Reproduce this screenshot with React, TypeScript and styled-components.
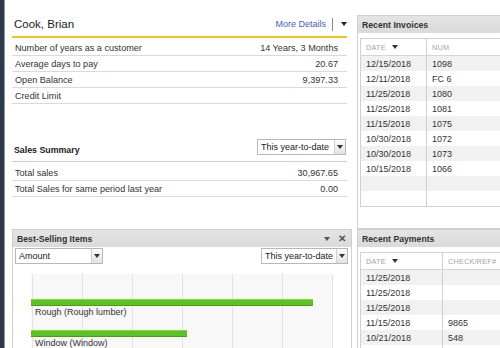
import React from 'react';
import styled, { createGlobalStyle } from 'styled-components';

const GlobalStyle = createGlobalStyle`
  * {
    box-sizing: border-box;
  }

  body {
    margin: 0;
    overflow: hidden;
    background: #fff;
  }
`;

const Page = styled.div`
  display: flex;
  width: 500px;
  height: 348px;
  overflow: hidden;
  background: #fff;
  font-family: 'Liberation Sans', Arial, sans-serif;
  color: #333;
`;

const SideStrip = styled.div`
  flex: 0 0 5px;
  background: #2d3a4c;
  border-right: 1px solid #8d97a3;
`;

const Main = styled.div`
  display: flex;
  gap: 5px;
  padding-left: 7px;
`;

const LeftCol = styled.div`
  flex: 0 0 340px;
  display: flex;
  flex-direction: column;
`;

const Summary = styled.section`
  flex: 0 0 229px;
  width: 335px;
`;

const NameRow = styled.div`
  display: flex;
  align-items: center;
  justify-content: space-between;
  height: 38px;
  padding: 12px 0 0 2px;
  border-bottom: 2px solid #f4c21c;
`;

const Name = styled.h1`
  margin: 0;
  font-size: 11.5px;
  font-weight: normal;
  color: #1a1a1a;
`;

const NameTools = styled.div`
  display: flex;
  align-items: center;
`;

const MoreLink = styled.a`
  font-size: 9px;
  color: #4262c4;
  text-decoration: none;
`;

const Divider = styled.span`
  width: 1px;
  height: 13px;
  margin-left: 6px;
  background: #8a8a8a;
`;

const Caret = styled.span<{ $color?: string }>`
  width: 0;
  height: 0;
  border-left: 3px solid transparent;
  border-right: 3px solid transparent;
  border-top: 4px solid ${(p) => p.$color || '#222'};
`;

const NameCaret = styled(Caret)`
  margin-left: 8px;
`;

const InfoList = styled.div`
  margin-top: 2px;
`;

const InfoRow = styled.div`
  display: flex;
  align-items: center;
  justify-content: space-between;
  height: 16px;
  padding: 0 9px 0 3px;
  border-bottom: 1px solid #dadada;
  font-size: 9.1px;
`;

const SalesHead = styled.div`
  display: flex;
  align-items: flex-end;
  justify-content: space-between;
  height: 58px;
  padding-right: 1px;
  border-bottom: 1px solid #cdcdcd;
`;

const SalesTitle = styled.h2`
  margin: 0;
  padding: 0 0 5px 2px;
  font-size: 8.8px;
  line-height: 12px;
  font-weight: bold;
  color: #222;
`;

const SalesSelect = styled.div`
  margin-bottom: 6px;
`;

const SalesList = styled.div`
  margin-top: 3px;
`;

const SelectBox = styled.div<{ $w: number }>`
  display: flex;
  width: ${(p) => p.$w}px;
  height: 16px;
  border: 1px solid #b8b8b8;
  background: #fff;
`;

const SelectText = styled.span`
  flex: 1;
  padding-left: 3px;
  font-size: 9px;
  line-height: 14px;
  color: #222;
`;

const SelectBtn = styled.span`
  display: flex;
  align-items: center;
  justify-content: center;
  width: 11px;
  border-left: 1px solid #d2d2d2;
  background: linear-gradient(#fbfbfb, #e2e2e2);
`;

const Panel = styled.section<{ $h?: number }>`
  display: flex;
  flex-direction: column;
  ${(p) => (p.$h ? `flex: 0 0 ${p.$h}px;` : 'flex: 1;')}
  border: 1px solid #cfcfcf;
  ${(p) => (p.$h ? '' : 'border-bottom: none;')}
  background: #fff;
`;

const PanelBar = styled.header`
  display: flex;
  align-items: center;
  justify-content: space-between;
  flex: 0 0 17px;
  padding: 0 5px 0 4px;
  background: linear-gradient(#e4e4e4, #dadada);
`;

const PanelTitle = styled.h3`
  margin: 0;
  font-size: 8.7px;
  font-weight: bold;
  color: #333;
`;

const BarTools = styled.div`
  display: flex;
  align-items: center;
  gap: 8px;
`;

const CloseX = styled.span`
  font-size: 10px;
  font-weight: bold;
  line-height: 10px;
  color: #555;
`;

const Controls = styled.div`
  display: flex;
  justify-content: space-between;
  padding: 1px 3px 0 2px;
`;

const Chart = styled.div`
  flex: 1;
  width: 302px;
  margin: 10px 0 0 18px;
  padding-top: 25px;
  background-color: #f8f8f8;
  background-image: repeating-linear-gradient(
    to right,
    #e2e2e2 0 1px,
    transparent 1px 50px
  );
  background-position: 1px 0;
`;

const Bar = styled.div<{ $gap: number }>`
  height: 7px;
  margin-top: ${(p) => p.$gap}px;
  background: #5ec322;
  box-shadow: inset 0 1px #7edb48, inset 0 -1px #47a014;
`;

const BarLabel = styled.div`
  padding-left: 4px;
  font-size: 9px;
  line-height: 12px;
  color: #333;
`;

const RightCol = styled.div`
  flex: 0 0 180px;
  display: flex;
  flex-direction: column;
  padding-top: 15px;
`;

const Table = styled.div`
  margin: 5px 0 0 2px;
  border-top: 1px solid #d0d0d0;
  border-left: 1px solid #d0d0d0;
`;

const InvTable = styled(Table)`
  border-bottom: 1px solid #d0d0d0;
`;

const HeadRow = styled.div`
  display: flex;
  height: 17px;
  border-bottom: 1px solid #d6d6d6;
  background: #fff;
`;

const Row = styled.div<{ $alt: boolean }>`
  display: flex;
  height: 15px;
  background: ${(p) => (p.$alt ? '#f1f1f1' : '#fff')};
`;

const Cell = styled.div<{ $w?: number }>`
  display: flex;
  align-items: center;
  ${(p) => (p.$w ? `flex: 0 0 ${p.$w}px; border-right: 1px solid #d0d0d0;` : 'flex: 1;')}
  padding-left: 5px;
  font-size: 9px;
  color: #333;
  white-space: nowrap;
`;

const HeadCell = styled(Cell)`
  font-size: 7.3px;
  color: #a3a3a3;
  letter-spacing: 0.2px;
`;

const SortCaret = styled(Caret)`
  margin-left: 6px;
`;

const Select = ({ label, w }: { label: string; w: number }) => (
  <SelectBox $w={w}>
    <SelectText>{label}</SelectText>
    <SelectBtn>
      <Caret $color="#333" />
    </SelectBtn>
  </SelectBox>
);

const info = [
  ['Number of years as a customer', '14 Years, 3 Months'],
  ['Average days to pay', '20.67'],
  ['Open Balance', '9,397.33'],
  ['Credit Limit', ''],
];

const sales = [
  ['Total sales', '30,967.65'],
  ['Total Sales for same period last year', '0.00'],
];

const invoices = [
  ['12/15/2018', '1098'],
  ['12/11/2018', 'FC 6'],
  ['11/25/2018', '1080'],
  ['11/25/2018', '1081'],
  ['11/15/2018', '1075'],
  ['10/30/2018', '1072'],
  ['10/30/2018', '1073'],
  ['10/15/2018', '1066'],
  ['', ''],
  ['', ''],
];

const payments = [
  ['11/25/2018', ''],
  ['11/25/2018', ''],
  ['11/25/2018', ''],
  ['11/15/2018', '9865'],
  ['10/21/2018', '548'],
  ['', ''],
];

const items = [
  { name: 'Rough (Rough lumber)', width: 282, gap: 0 },
  { name: 'Window (Window)', width: 156, gap: 12 },
];

const App = () => {
  return (
    <Page>
      <GlobalStyle />
      <SideStrip />
      <Main>
        <LeftCol>
          <Summary>
            <NameRow>
              <Name>Cook, Brian</Name>
              <NameTools>
                <MoreLink>More Details</MoreLink>
                <Divider />
                <NameCaret />
              </NameTools>
            </NameRow>
            <InfoList>
              {info.map(([k, v]) => (
                <InfoRow key={k}>
                  <span>{k}</span>
                  <span>{v}</span>
                </InfoRow>
              ))}
            </InfoList>
            <SalesHead>
              <SalesTitle>Sales Summary</SalesTitle>
              <SalesSelect>
                <Select label="This year-to-date" w={89} />
              </SalesSelect>
            </SalesHead>
            <SalesList>
              {sales.map(([k, v]) => (
                <InfoRow key={k}>
                  <span>{k}</span>
                  <span>{v}</span>
                </InfoRow>
              ))}
            </SalesList>
          </Summary>

          <Panel>
            <PanelBar>
              <PanelTitle>Best-Selling Items</PanelTitle>
              <BarTools>
                <Caret $color="#555" />
                <CloseX>✕</CloseX>
              </BarTools>
            </PanelBar>
            <Controls>
              <Select label="Amount" w={88} />
              <Select label="This year-to-date" w={87} />
            </Controls>
            <Chart>
              {items.map((it) => (
                <div key={it.name}>
                  <Bar $gap={it.gap} style={{ width: it.width }} />
                  <BarLabel>{it.name}</BarLabel>
                </div>
              ))}
            </Chart>
          </Panel>
        </LeftCol>

        <RightCol>
          <Panel $h={214}>
            <PanelBar>
              <PanelTitle>Recent Invoices</PanelTitle>
            </PanelBar>
            <InvTable>
              <HeadRow>
                <HeadCell $w={66}>
                  DATE
                  <SortCaret $color="#333" />
                </HeadCell>
                <HeadCell>NUM</HeadCell>
              </HeadRow>
              {invoices.map(([d, n], i) => (
                <Row key={i} $alt={i % 2 === 0}>
                  <Cell $w={66}>{d}</Cell>
                  <Cell>{n}</Cell>
                </Row>
              ))}
            </InvTable>
          </Panel>

          <Panel>
            <PanelBar>
              <PanelTitle>Recent Payments</PanelTitle>
            </PanelBar>
            <Table>
              <HeadRow>
                <HeadCell $w={82}>
                  DATE
                  <SortCaret $color="#333" />
                </HeadCell>
                <HeadCell>CHECK/REF#</HeadCell>
              </HeadRow>
              {payments.map(([d, n], i) => (
                <Row key={i} $alt={i % 2 === 0}>
                  <Cell $w={82}>{d}</Cell>
                  <Cell>{n}</Cell>
                </Row>
              ))}
            </Table>
          </Panel>
        </RightCol>
      </Main>
    </Page>
  );
};

export default App;
